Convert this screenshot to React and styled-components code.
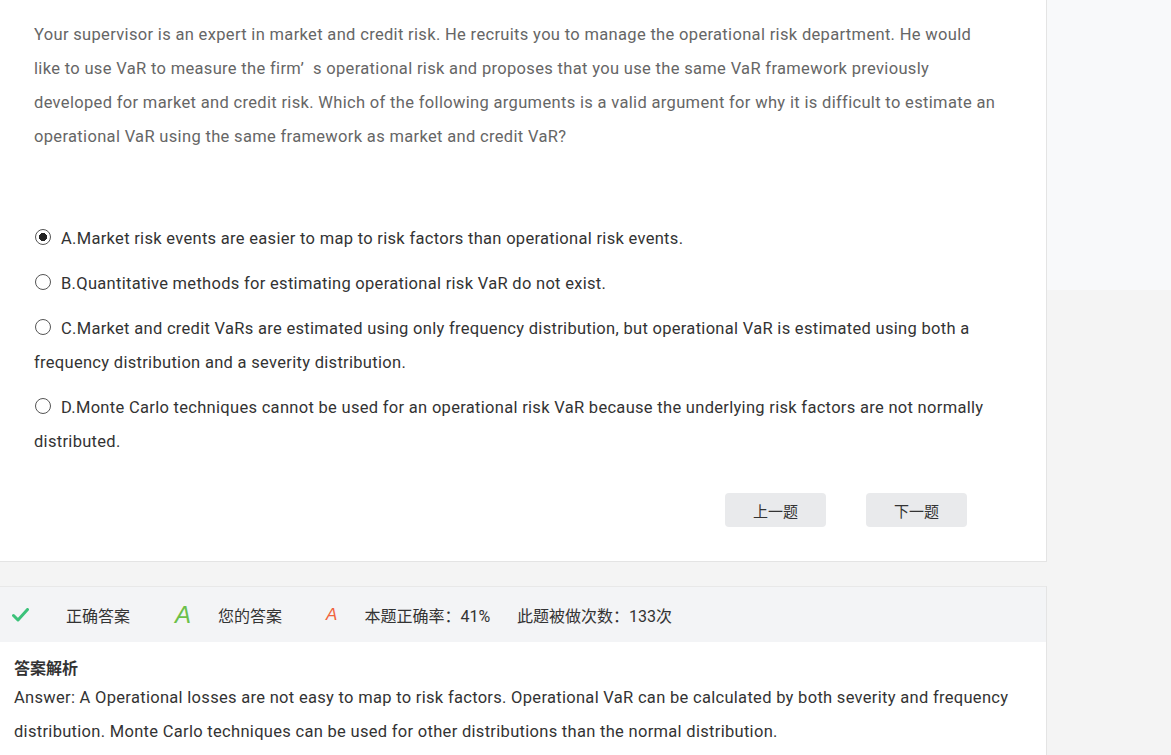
import React from "react";
import styled, { createGlobalStyle } from "styled-components";

const GlobalStyle = createGlobalStyle`
body {
    margin: 0;
    background: #f4f4f4;
    font-family: Roboto, "Noto Sans CJK SC", sans-serif;
}
`

const Page = styled.div`
display: flex;
align-items: stretch;
min-height: 755px;
`

const Main = styled.div`
width: 1047px;
flex-shrink: 0;
display: flex;
flex-direction: column;
`

const Side = styled.div`
flex: 1;
align-self: flex-start;
height: 290px;
background: #f8f9fa;
`

const QuestionPanel = styled.section`
background: #fff;
border-right: 1px solid #e4e4e4;
border-bottom: 1px solid #e4e4e4;
padding: 18px 34px 34px;
letter-spacing: 0.3px;
`

const Stem = styled.p`
max-width: 965px;
margin: 0;
font-size: 16.5px;
line-height: 34px;
letter-spacing: 0.33px;
color: #666;
`

const OptionList = styled.ul`
list-style: none;
margin: 68px 0 0;
padding: 0;
`

const Option = styled.li`
font-size: 16.5px;
line-height: 34px;
color: #333;
margin-bottom: 11px;
&:last-child { margin-bottom: 0 }
`

const Radio = styled.span`
display: inline-block;
vertical-align: -1px;
box-sizing: border-box;
width: 16px;
height: 16px;
margin: 0 10px 0 1px;
border-radius: 50%;
border: 1px solid #555;
background: ${({ checked }) => checked
    ? "radial-gradient(circle, #222 0 3.8px, transparent 4.3px)"
    : "transparent"};
`

const Actions = styled.div`
display: flex;
justify-content: flex-end;
gap: 40px;
margin: 34px 45px 0 0;
`

const NavButton = styled.button`
width: 101px;
height: 34px;
border: none;
border-radius: 4px;
background: #e9eaec;
color: #333;
font-family: "Noto Sans CJK SC", sans-serif;
font-size: 15px;
cursor: pointer;
`

const StatsBar = styled.div`
display: flex;
align-items: center;
flex-shrink: 0;
height: 55px;
margin-top: 24px;
padding-left: 12px;
background: #f3f4f6;
border-top: 1px solid #e8e8e8;
border-right: 1px solid #e4e4e4;
font-size: 16px;
color: #333;
`

const StatLabel = styled.span`
margin-right: ${({ gap }) => gap || 0}px;
`

const StatIcon = styled.span`
display: inline-flex;
margin-right: ${({ gap }) => gap || 0}px;
font-family: "Liberation Sans", sans-serif;
font-style: italic;
color: ${({ color }) => color};
font-size: ${({ size }) => size}px;
line-height: 1;
`

const Explain = styled.section`
flex: 1;
background: #fff;
border-right: 1px solid #e4e4e4;
padding: 15px 14px 8px;
color: #333;
letter-spacing: 0.3px;
`

const ExplainTitle = styled.h4`
margin: 0;
font-size: 16px;
line-height: 24px;
font-weight: 700;
letter-spacing: 0;
`

const ExplainText = styled.p`
margin: 0;
font-size: 16.5px;
line-height: 34px;
`

const options = [
    ["A", "Market risk events are easier to map to risk factors than operational risk events."],
    ["B", "Quantitative methods for estimating operational risk VaR do not exist."],
    ["C", "Market and credit VaRs are estimated using only frequency distribution, but operational VaR is estimated using both a frequency distribution and a severity distribution."],
    ["D", "Monte Carlo techniques cannot be used for an operational risk VaR because the underlying risk factors are not normally distributed."],
];

const Check = () => (
    <svg width="17" height="14" viewBox="0 0 17 14">
        <path d="M1.5 7.5 L6 12 L15.5 1.5" fill="none" stroke="#3cc27a" strokeWidth="3" strokeLinecap="round" strokeLinejoin="round" />
    </svg>
);

const App = () => {
    const selected = "A";

    return <Page>
        <GlobalStyle />
        <Main>
            <QuestionPanel>
                <Stem>
                    Your supervisor is an expert in market and credit risk. He recruits you to manage the operational risk department. He would like to use VaR to measure the firm’&nbsp; s operational risk and proposes that you use the same VaR framework previously developed for market and credit risk. Which of the following arguments is a valid argument for why it is difficult to estimate an operational VaR using the same framework as market and credit VaR?
                </Stem>
                <OptionList>
                    {options.map(([key, text]) => (
                        <Option key={key}>
                            <Radio checked={key === selected} />{`${key}.${text}`}
                        </Option>
                    ))}
                </OptionList>
                <Actions>
                    <NavButton>上一题</NavButton>
                    <NavButton>下一题</NavButton>
                </Actions>
            </QuestionPanel>
            <StatsBar>
                <StatIcon gap={37}><Check /></StatIcon>
                <StatLabel gap={45}>正确答案</StatLabel>
                <StatIcon gap={27} size={24} color="#6cc04a">A</StatIcon>
                <StatLabel gap={44}>您的答案</StatLabel>
                <StatIcon gap={27} size={17} color="#f0643c">A</StatIcon>
                <StatLabel gap={27}>本题正确率：41%</StatLabel>
                <StatLabel>此题被做次数：133次</StatLabel>
            </StatsBar>
            <Explain>
                <ExplainTitle>答案解析</ExplainTitle>
                <ExplainText>
                    Answer: A Operational losses are not easy to map to risk factors. Operational VaR can be calculated by both severity and frequency distribution. Monte Carlo techniques can be used for other distributions than the normal distribution.
                </ExplainText>
            </Explain>
        </Main>
        <Side />
    </Page>
}

export default App;
